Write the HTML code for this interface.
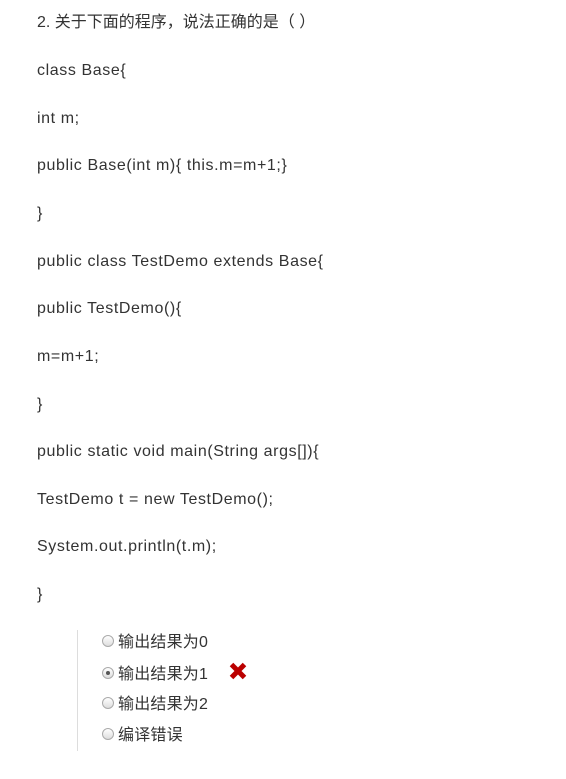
<!DOCTYPE html>
<html><head><meta charset="utf-8"><style>
body{margin:0;background:#fff;width:566px;height:779px;overflow:hidden;font-family:"Liberation Sans","Noto Sans CJK SC",sans-serif;color:#333;font-size:16px;letter-spacing:0.6px}
.l{position:absolute;left:37px;line-height:20px;white-space:nowrap}
.opts{position:absolute;left:77px;top:630px;height:121px;border-left:1px solid #ddd}
.o{position:absolute;left:24px;white-space:nowrap;line-height:20px;letter-spacing:0.2px}
.r{display:inline-block;width:12px;height:12px;border-radius:50%;border:1px solid #aaa;background:linear-gradient(#fff,#ddd);vertical-align:0px;margin-right:4px;box-sizing:border-box;position:relative}
.r.c::after{content:"";position:absolute;left:3px;top:3px;width:4px;height:4px;border-radius:50%;background:#555}
</style></head><body>
<div class="l" style="top:13px;letter-spacing:0px">2. 关于下面的程序，说法正确的是（ ）</div>
<div class="l" style="top:61px">class Base{</div>
<div class="l" style="top:109px">int m;</div>
<div class="l" style="top:156px">public Base(int m){ this.m=m+1;}</div>
<div class="l" style="top:204px">}</div>
<div class="l" style="top:252px">public class TestDemo extends Base{</div>
<div class="l" style="top:299px">public TestDemo(){</div>
<div class="l" style="top:347px">m=m+1;</div>
<div class="l" style="top:395px">}</div>
<div class="l" style="top:442px">public static void main(String args[]){</div>
<div class="l" style="top:490px">TestDemo t = new TestDemo();</div>
<div class="l" style="top:537px">System.out.println(t.m);</div>
<div class="l" style="top:585px">}</div>
<div class="opts">
<div class="o" style="top:3px"><span class="r"></span>输出结果为0</div>
<div class="o" style="top:35px"><span class="r c"></span>输出结果为1</div>
<div class="o" style="top:65px"><span class="r"></span>输出结果为2</div>
<div class="o" style="top:96px"><span class="r"></span>编译错误</div>
</div>
<svg style="position:absolute;left:228px;top:661px" width="20" height="20" viewBox="0 0 20 20"><path d="M3.5 3.5L16.5 16.5M16.5 3.5L3.5 16.5" stroke="#b00" stroke-width="5" stroke-linecap="butt"/></svg>
</body></html>
